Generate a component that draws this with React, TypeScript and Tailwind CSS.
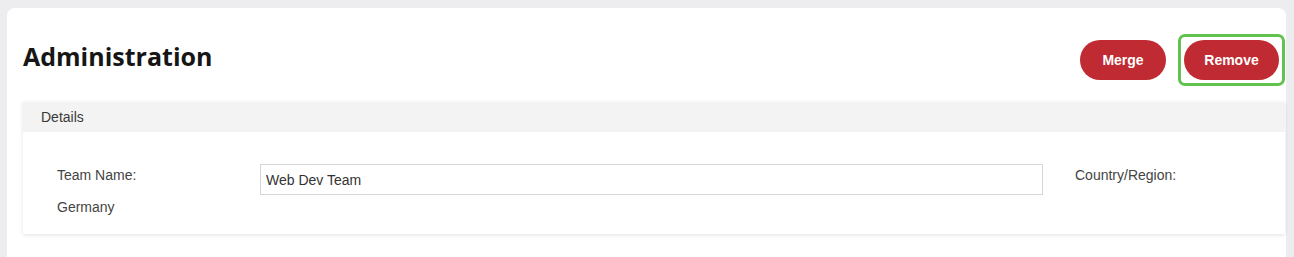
export default function App() {
  return (
    <div className="h-[257px] w-full overflow-hidden bg-[#ededf0] pl-[7px] pr-[8px] pt-[8px] font-['Liberation_Sans',Arial,sans-serif]">
      <div className="h-[260px] rounded-[8px] bg-white pl-4">
        <div className="flex h-[94px] items-center justify-between pr-[1px]">
          <h1 className="pt-[4px] font-['Open_Sans',sans-serif] text-[25px] font-bold tracking-[0px] text-[#161616]">
            Administration
          </h1>
          <div className="flex items-center gap-[12px] pt-[10px]">
            <button className="h-10 w-[86px] rounded-full bg-[#c02a32] text-[14px] font-bold text-white">
              Merge
            </button>
            <div className="rounded-[7px] border-[3px] border-[#62c24f] p-[3px]">
              <button className="block h-10 w-[95px] rounded-full bg-[#c02a32] text-[14px] font-bold text-white">
                Remove
              </button>
            </div>
          </div>
        </div>
        <section className="mr-[1px] shadow-[0_1px_4px_rgba(0,0,0,0.12)]">
          <div className="flex h-[30px] items-center bg-[#f3f3f3] pl-[18px] text-[14px] text-[#3a3a3a]">Details</div>
          <div className="px-[34px] pb-[16px] pt-[32px] text-[14px] text-[#444]">
            <div className="flex items-start">
              <label className="w-[203px] pt-[1px]">Team Name:</label>
              <input
                readOnly
                value="Web Dev Team"
                className="h-[31px] w-[783px] border border-[#d6d6d6] px-[5px] text-[14px] text-[#333] outline-none"
              />
              <label className="ml-[32px] pt-[1px]">Country/Region:</label>
            </div>
            <div className="mt-[2px]">Germany</div>
          </div>
        </section>
      </div>
    </div>
  )
}
